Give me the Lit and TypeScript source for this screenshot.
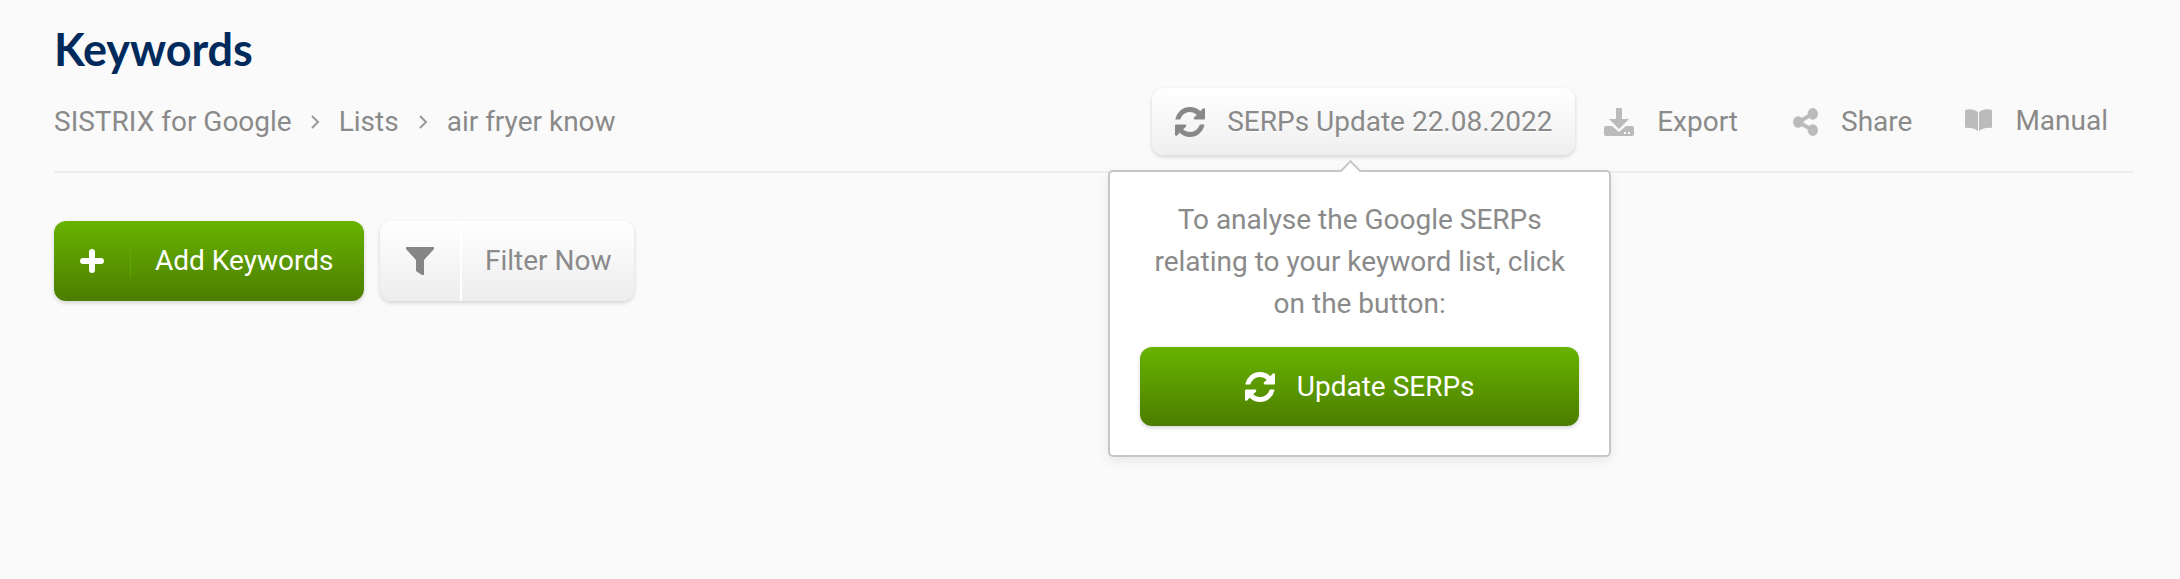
import { LitElement, html, css, svg } from "lit";
import { customElement } from "lit/decorators.js";

const refresh = svg`<path d="M1639 1056q0 5-1 7-64 268-268 434.5t-478 166.5q-146 0-282.5-55t-243.5-157l-129 129q-19 19-45 19t-45-19-19-45v-448q0-26 19-45t45-19h448q26 0 45 19t19 45-19 45l-137 137q71 66 161 102t187 36q134 0 250-65t186-179q11-17 53-117 8-23 30-23h192q13 0 22.5 9.5t9.5 22.5zm25-800v448q0 26-19 45t-45 19h-448q-26 0-45-19t-19-45 19-45l138-138q-148-137-349-137-134 0-250 65t-186 179q-11 17-53 117-8 23-30 23h-199q-13 0-22.5-9.5t-9.5-22.5v-7q65-268 270-434.5t480-166.5q146 0 284 55.5t245 156.5l130-129q19-19 45-19t45 19 19 45z"/>`;
const share = svg`<path d="M1344 1024q133 0 226.5 93.5t93.5 226.5-93.5 226.5-226.5 93.5-226.5-93.5-93.5-226.5q0-12 2-34l-360-180q-92 86-218 86-133 0-226.5-93.5t-93.5-226.5 93.5-226.5 226.5-93.5q126 0 218 86l360-180q-2-22-2-34 0-133 93.5-226.5t226.5-93.5 226.5 93.5 93.5 226.5-93.5 226.5-226.5 93.5q-126 0-218-86l-360 180q2 22 2 34t-2 34l360 180q92-86 218-86z"/>`;

@customElement("app-root")
export class AppRoot extends LitElement {
  static styles = css`
    :host {
      display: block;
      min-height: 579px;
      background: #fafafa;
      font-family: Roboto, "Liberation Sans", sans-serif;
      color: #8a8a8a;
      font-size: 28px;
      overflow: hidden;
    }
    .page { padding: 24px 47px 0 54px; }
    h1 {
      margin: 0;
      height: 40px;
      line-height: 50px;
      font-family: Lato, sans-serif;
      font-size: 45px;
      font-weight: 700;
      color: #002a5c;
      letter-spacing: -0.1px;
    }
    .bar {
      display: flex;
      align-items: center;
      height: 67px;
      margin-top: 24px;
      padding-bottom: 16px;
      border-bottom: 2px solid #eeeeee;
    }
    .crumbs { display: flex; align-items: center; flex: 1; }
    .chev { width: 12px; height: 18px; margin: 0 18px 0 17px; fill: none; stroke: #999; stroke-width: 2; }
    .chev + span + .chev { margin: 0 18px; }
    .serps-wrap { position: relative; }
    .serps {
      display: flex;
      align-items: center;
      height: 67px;
      width: 423px;
      box-sizing: border-box;
      padding-left: 23px;
      gap: 22px;
      border-radius: 12px;
      background: linear-gradient(#ffffff, #efefef);
      box-shadow: 0 2px 4px rgba(0, 0, 0, 0.16);
      text-shadow: 0 1px 0 #fff;
    }
    .serps svg { width: 30px; height: 30px; fill: #888; flex: none; }
    .action { display: flex; align-items: center; }
    .action svg { flex: none; fill: #bbb; }
    .export { margin-left: 29px; gap: 23px; }
    .export svg { width: 30px; height: 28px; }
    .share { margin-left: 55px; gap: 23px; }
    .share svg { width: 25px; height: 28px; }
    .manual { margin-left: 53px; gap: 23px; margin-top: -3px; margin-right: 25px; }
    .manual svg { width: 27px; height: 22px; }
    .popover {
      position: absolute;
      top: 82px;
      left: -44px;
      width: 503px;
      box-sizing: border-box;
      height: 287px;
      padding: 27px 29px 0;
      background: #fff;
      border: 2px solid #c6c6c6;
      border-radius: 5px;
      box-shadow: 0 4px 12px rgba(0, 0, 0, 0.08);
      text-align: center;
      line-height: 42px;
      z-index: 2;
    }
    .popover::before {
      content: "";
      position: absolute;
      top: -9px;
      left: 233px;
      width: 13px;
      height: 13px;
      background: #fff;
      border-left: 2px solid #c6c6c6;
      border-top: 2px solid #c6c6c6;
      transform: rotate(45deg);
    }
    .popover p { margin: 0 0 22px; }
    .green {
      display: flex;
      align-items: center;
      color: #fff;
      background: linear-gradient(#68b300, #4c7d00);
      border-radius: 12px;
      box-shadow: 0 2px 4px rgba(0, 0, 0, 0.16);
    }
    .update { height: 79px; justify-content: center; gap: 22px; margin: 0 1px; }
    .update svg { width: 30px; height: 30px; fill: #fff; }
    .tools { display: flex; gap: 16px; margin-top: 48px; }
    .add { width: 310px; height: 80px; }
    .plus { width: 77px; display: flex; justify-content: center; border-right: 1px solid #62a600; height: 34px; align-items: center; box-sizing: border-box; }
    .plus svg { width: 26px; height: 26px; stroke: #fff; stroke-width: 6; stroke-linecap: round; }
    .add span { margin-left: 24px; margin-top: -2px; }
    .filter {
      display: flex;
      width: 254px;
      height: 80px;
      border-radius: 12px;
      background: linear-gradient(#ffffff, #ededed);
      box-shadow: 0 2px 4px rgba(0, 0, 0, 0.16);
    }
    .fi {
      width: 80px;
      display: flex;
      align-items: center;
      justify-content: center;
      border-right: 2px solid #fff;
      box-sizing: content-box;
    }
    .fi svg { width: 28px; height: 28px; fill: #858585; }
    .fl { display: flex; align-items: center; margin-left: 23px; margin-top: -2px; }
  `;

  render() {
    return html`
      <div class="page">
        <h1>Keywords</h1>
        <div class="bar">
          <div class="crumbs">
            <span>SISTRIX for Google</span>
            <svg class="chev" viewBox="0 0 12 18"><path d="M3 3l6 6-6 6" /></svg>
            <span>Lists</span>
            <svg class="chev" viewBox="0 0 12 18"><path d="M3 3l6 6-6 6" /></svg>
            <span>air fryer know</span>
          </div>
          <div class="serps-wrap">
            <div class="serps">
              <svg viewBox="128 128 1536 1536">${refresh}</svg>
              <span>SERPs Update 22.08.2022</span>
            </div>
            <div class="popover">
              <p>To analyse the Google SERPs relating to your keyword list, click on the button:</p>
              <div class="green update">
                <svg viewBox="128 128 1536 1536">${refresh}</svg>
                <span>Update SERPs</span>
              </div>
            </div>
          </div>
          <div class="action export">
            <svg viewBox="0 0 30 28">
              <path d="M12 1a1 1 0 0 1 1-1h4a1 1 0 0 1 1 1v10h7L15 21 5 11h7z" />
              <path fill-rule="evenodd" d="M2 18h6l7 6 7-6h6a2 2 0 0 1 2 2v6a2 2 0 0 1-2 2H2a2 2 0 0 1-2-2v-6a2 2 0 0 1 2-2zm18 6v2h2v-2zm4 0v2h2v-2z" />
            </svg>
            <span>Export</span>
          </div>
          <div class="action share">
            <svg viewBox="128 128 1536 1536" preserveAspectRatio="none">${share}</svg>
            <span>Share</span>
          </div>
          <div class="action manual">
            <svg viewBox="0 0 27 22">
              <path d="M0 1c5-1.500 9-1 13 2v19c-4-3-8-3.500-13-3z" />
              <path d="M27 1c-5-1.500-9-1-13 2v19c4-3 8-3.500 13-3z" />
            </svg>
            <span>Manual</span>
          </div>
        </div>
        <div class="tools">
          <div class="green add">
            <div class="plus">
              <svg viewBox="0 0 26 26"><path d="M13 4v18M4 13h18" /></svg>
            </div>
            <span>Add Keywords</span>
          </div>
          <div class="filter">
            <div class="fi">
              <svg viewBox="0 0 28 28"><path d="M0 0h28v2L18 13v15h-2l-6-4V13L0 2z" /></svg>
            </div>
            <span class="fl">Filter Now</span>
          </div>
        </div>
      </div>
    `;
  }
}
